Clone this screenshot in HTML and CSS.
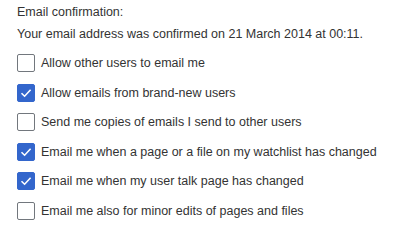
FILE: index.html
```html
<!DOCTYPE html>
<html>
<head>
<meta charset="utf-8">
<link rel="stylesheet" href="styles.css">
</head>
<body>
<div class="prefs">
  <div class="label">Email confirmation:</div>
  <div class="info">Your email address was confirmed on 21 March 2014 at 00:11.</div>
  <div class="list">
    <label class="row"><span class="box"></span><span>Allow other users to email me</span></label>
    <label class="row"><span class="box checked"><svg viewBox="0 0 18 18" width="18" height="18"><path d="M4.5 9.2 L7.6 12.2 L13.6 5.8" fill="none" stroke="#fff" stroke-width="1.6"/></svg></span><span>Allow emails from brand-new users</span></label>
    <label class="row"><span class="box"></span><span>Send me copies of emails I send to other users</span></label>
    <label class="row"><span class="box checked"><svg viewBox="0 0 18 18" width="18" height="18"><path d="M4.5 9.2 L7.6 12.2 L13.6 5.8" fill="none" stroke="#fff" stroke-width="1.6"/></svg></span><span>Email me when a page or a file on my watchlist has changed</span></label>
    <label class="row"><span class="box checked"><svg viewBox="0 0 18 18" width="18" height="18"><path d="M4.5 9.2 L7.6 12.2 L13.6 5.8" fill="none" stroke="#fff" stroke-width="1.6"/></svg></span><span>Email me when my user talk page has changed</span></label>
    <label class="row"><span class="box"></span><span>Email me also for minor edits of pages and files</span></label>
  </div>
</div>
</body>
</html>
```
FILE: styles.css
```css
html, body {
  margin: 0;
  padding: 0;
  background: #fff;
}
.prefs {
  padding: 4px 0 0 17px;
  font-family: "Liberation Sans", Arial, sans-serif;
  font-size: 12.5px;
  line-height: 16px;
  color: #333;
}
.label {
  margin-bottom: 6px;
}
.info {
  margin-bottom: 12px;
}
.list {
  display: flex;
  flex-direction: column;
  gap: 11.5px;
}
.row {
  display: flex;
  align-items: center;
  gap: 6px;
  height: 18px;
}
.box {
  box-sizing: border-box;
  width: 18px;
  height: 18px;
  border: 1px solid #72777d;
  border-radius: 2px;
  background: #fff;
  flex: none;
  position: relative;
}
.box.checked {
  background: #36c;
  border-color: #36c;
}
.box svg {
  position: absolute;
  left: -1px;
  top: -1px;
}
```
